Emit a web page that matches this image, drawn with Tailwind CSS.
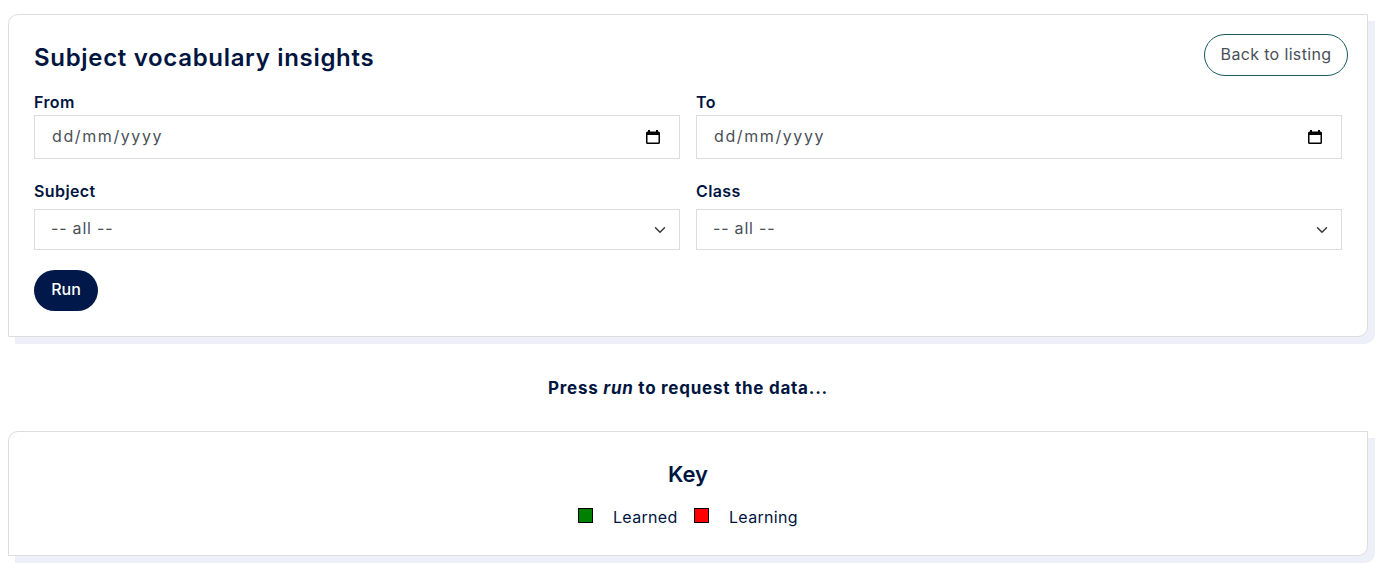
<!DOCTYPE html>
<html lang="en">
<head>
    <meta charset="UTF-8">
    <title>Subject vocabulary insights</title>
    <script src="https://cdn.jsdelivr.net/npm/@tailwindcss/browser@4"></script>
</head>
<body class="bg-white font-['Inter',sans-serif] text-[#00153f]">
    <div class="min-h-[570px] pl-2 pr-[13px] pt-[14px] pb-[14px]">
        <!-- Filters card -->
        <section class="h-[323px] bg-white border border-[#dddddd] rounded-tl-[10px] rounded-br-[10px] shadow-[7px_7px_0_#edf0f8] pl-[25px] pr-[25px] pt-[19px]">
            <header class="flex justify-between items-start h-[42px] -mr-[6px]">
                <h1 class="text-[24px] leading-[48px] font-semibold tracking-[0.68px]">Subject vocabulary insights</h1>
                <a href="#" class="h-[42px] w-[144px] pb-[2px] flex items-center justify-center border border-[#1b5a5a] rounded-full text-[#495057] text-[16px] tracking-[0.35px]">Back to listing</a>
            </header>

            <div class="grid grid-cols-2 gap-x-4 mt-[16px]">
                <div>
                    <label class="block h-[23px] text-[16px] leading-[20px] font-semibold tracking-[0.4px]">From</label>
                    <div class="h-[44px] pb-[2px] flex items-center justify-between border border-[#dddddd] pl-[17px] pr-[18px] text-[#495057] text-[16px] tracking-[1.6px]">
                        <span>dd/mm/yyyy</span>
                        <svg class="mt-[2px]" width="16" height="16" viewBox="0 0 16 16"><path fill="#000" d="M3 1h2v1.500h6V1h2v1.500h.5A1.500 1.500 0 0 1 15 4v9.500a1.500 1.500 0 0 1-1.500 1.500h-11A1.500 1.500 0 0 1 1 13.500V4a1.500 1.500 0 0 1 1.500-1.500H3zM2.500 6v7.500h11V6z"/></svg>
                    </div>
                </div>
                <div>
                    <label class="block h-[23px] text-[16px] leading-[20px] font-semibold tracking-[0.4px]">To</label>
                    <div class="h-[44px] pb-[2px] flex items-center justify-between border border-[#dddddd] pl-[17px] pr-[18px] text-[#495057] text-[16px] tracking-[1.6px]">
                        <span>dd/mm/yyyy</span>
                        <svg class="mt-[2px]" width="16" height="16" viewBox="0 0 16 16"><path fill="#000" d="M3 1h2v1.500h6V1h2v1.500h.5A1.500 1.500 0 0 1 15 4v9.500a1.500 1.500 0 0 1-1.500 1.500h-11A1.500 1.500 0 0 1 1 13.500V4a1.500 1.500 0 0 1 1.500-1.500H3zM2.500 6v7.500h11V6z"/></svg>
                    </div>
                </div>
            </div>

            <div class="grid grid-cols-2 gap-x-4 mt-[22px]">
                <div>
                    <label class="block h-[28px] text-[16px] leading-[20px] font-semibold tracking-[0.4px]">Subject</label>
                    <div class="relative">
                        <select class="w-full h-[41px] pb-[3px] appearance-none bg-white border border-[#dddddd] pl-[16px] text-[#495057] text-[16px] tracking-[0.8px]"><option>-- all --</option></select>
                        <svg class="absolute right-[14px] top-[15px]" width="12" height="12" viewBox="0 0 16 16"><path fill="none" stroke="#343a40" stroke-width="2" stroke-linecap="round" stroke-linejoin="round" d="m2 5 6 6 6-6"/></svg>
                    </div>
                </div>
                <div>
                    <label class="block h-[28px] text-[16px] leading-[20px] font-semibold tracking-[0.4px]">Class</label>
                    <div class="relative">
                        <select class="w-full h-[41px] pb-[3px] appearance-none bg-white border border-[#dddddd] pl-[16px] text-[#495057] text-[16px] tracking-[0.8px]"><option>-- all --</option></select>
                        <svg class="absolute right-[14px] top-[15px]" width="12" height="12" viewBox="0 0 16 16"><path fill="none" stroke="#343a40" stroke-width="2" stroke-linecap="round" stroke-linejoin="round" d="m2 5 6 6 6-6"/></svg>
                    </div>
                </div>
            </div>

            <button class="mt-[20px] w-[64px] h-[41px] pb-[3px] rounded-full bg-[#00184a] text-white text-[16px] font-medium">Run</button>
        </section>

        <p class="mt-[39px] h-[24px] text-center text-[17px] leading-[24px] font-bold tracking-[0.75px]">Press <em>run</em> to request the data...</p>

        <!-- Key card -->
        <section class="mt-[31px] h-[125px] bg-white border border-[#dddddd] rounded-tl-[10px] rounded-br-[10px] shadow-[7px_7px_0_#edf0f8] pt-[26px] text-center">
            <h2 class="text-[22px] leading-[32px] font-semibold">Key</h2>
            <div class="mt-[16px] flex justify-center items-start text-[16px] leading-[22px] tracking-[0.32px]">
                <span class="w-[15px] h-[15px] mt-[2px] bg-[#008000] border border-black"></span>
                <span class="ml-[20px] w-[81px] text-left">Learned</span>
                <span class="w-[15px] h-[15px] mt-[2px] bg-[#ff0000] border border-black"></span>
                <span class="ml-[20px] w-[69px] text-left">Learning</span>
            </div>
        </section>
    </div>
</body>
</html>
